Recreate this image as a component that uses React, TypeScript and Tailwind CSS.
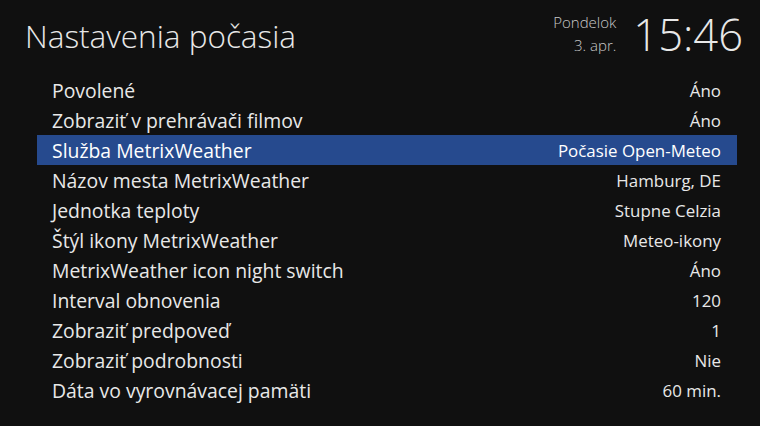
const rows: [string, string][] = [
  ['Povolené', 'Áno'],
  ['Zobraziť v prehrávači filmov', 'Áno'],
  ['Služba MetrixWeather', 'Počasie Open-Meteo'],
  ['Názov mesta MetrixWeather', 'Hamburg, DE'],
  ['Jednotka teploty', 'Stupne Celzia'],
  ['Štýl ikony MetrixWeather', 'Meteo-ikony'],
  ['MetrixWeather icon night switch', 'Áno'],
  ['Interval obnovenia', '120'],
  ['Zobraziť predpoveď', '1'],
  ['Zobraziť podrobnosti', 'Nie'],
  ['Dáta vo vyrovnávacej pamäti', '60 min.'],
];

export default function App() {
  const selected = 2;

  return (
    <div
      className="w-[760px] h-[426px] bg-[#101010] text-[#e8e8e8] overflow-hidden"
      style={{ fontFamily: '"Open Sans", "Noto Sans", sans-serif' }}
    >
      <div className="flex items-start justify-between h-[75px] pl-[25px] pr-[17px]">
        <h1 className="mt-[20px] text-[31.5px] font-light leading-none">Nastavenia počasia</h1>
        <div className="flex items-start gap-[17px] mt-[10px]">
          <div className="flex flex-col items-end text-[15px] font-light text-[#c8c8c8] leading-[23px] mt-[1px]">
            <span>Pondelok</span>
            <span>3. apr.</span>
          </div>
          <div className="text-[43.5px] font-light leading-none mt-[3px]">15:46</div>
        </div>
      </div>

      <div className="ml-[37px] mr-[23px] flex flex-col">
        {rows.map(([label, value], i) => (
          <div
            key={label}
            className={
              'flex items-center justify-between h-[30px] pt-[1px] pl-[15px] pr-[16px] text-[19.4px] ' +
              (i === selected ? 'bg-[#264a8e] text-white' : '')
            }
          >
            <span>{label}</span>
            <span className="text-[16.9px]">{value}</span>
          </div>
        ))}
      </div>
    </div>
  );
}
